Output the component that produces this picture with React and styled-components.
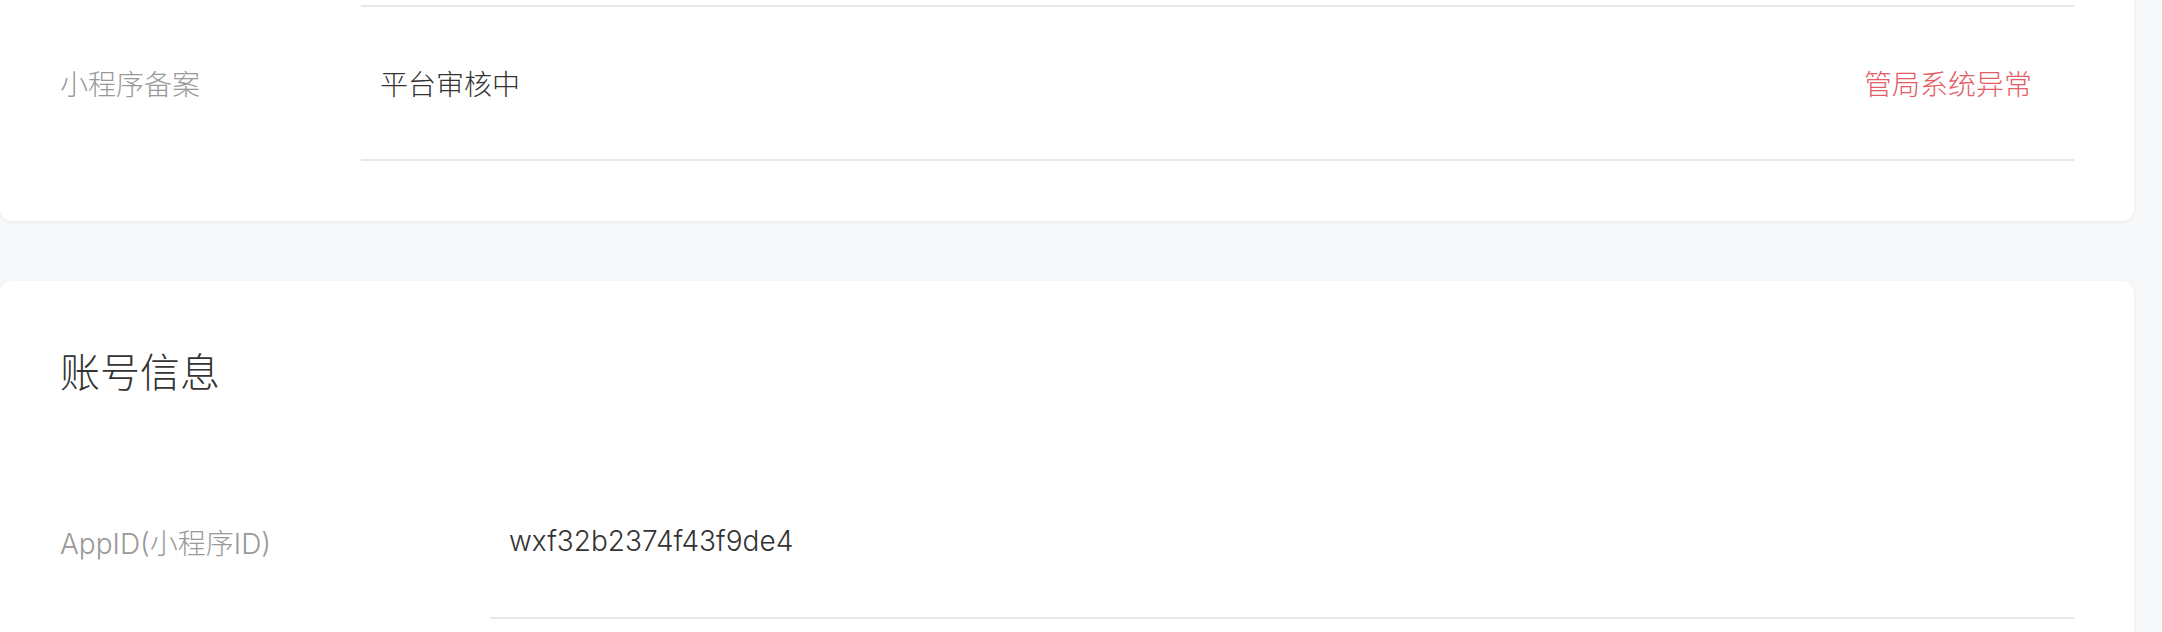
import React from 'react'
import styled, { createGlobalStyle } from 'styled-components'

const GlobalStyle = createGlobalStyle`
  html, body {
    margin: 0;
    padding: 0;
    background: #f7f8fa;
  }
  body {
    font-family: Inter, "Noto Sans CJK SC", "Noto Sans", sans-serif;
    font-weight: 300;
    -webkit-font-smoothing: antialiased;
  }
`

const Page = styled.div`
  display: flex;
  flex-direction: column;
  gap: 60px;
  padding: 0 28px 0 0;
  height: 632px;
  overflow: hidden;
`

const Card = styled.section`
  background: #fff;
  border-radius: ${({ $cut }) => ($cut ? '0 0 12px 12px' : '12px')};
  box-shadow: 0 1px 4px rgba(0, 0, 0, 0.06);
  padding: ${({ $cut }) => ($cut ? '5px 60px 60px' : '60px 60px 60px')};
`

const Heading = styled.h2`
  margin: 0 0 60px;
  font-size: 40px;
  line-height: 64px;
  font-weight: 300;
  color: #333;
`

const Row = styled.div`
  display: flex;
  align-items: center;
`

const Label = styled.div`
  width: ${({ $width }) => $width}px;
  flex-shrink: 0;
  font-size: 28px;
  color: #999;
`

const Value = styled.div`
  flex: 1;
  height: 152px;
  display: flex;
  align-items: center;
  justify-content: space-between;
  padding: 0 42px 0 19px;
  border-top: ${({ $top }) => ($top ? '2px solid #e6e6eb' : 'none')};
  border-bottom: 2px solid #e6e6eb;
  font-size: 28px;
  color: #333;
`

const Status = styled.span`
  color: #e45d66;
`

export default function App() {
  return (
    <>
      <GlobalStyle />
      <Page>
        <Card $cut>
          <Row>
            <Label $width={301}>小程序备案</Label>
            <Value $top>
              <span>平台审核中</span>
              <Status>管局系统异常</Status>
            </Value>
          </Row>
        </Card>
        <Card>
          <Heading>账号信息</Heading>
          <Row>
            <Label $width={430}>AppID(小程序ID)</Label>
            <Value>
              <span>wxf32b2374f43f9de4</span>
            </Value>
          </Row>
        </Card>
      </Page>
    </>
  )
}
